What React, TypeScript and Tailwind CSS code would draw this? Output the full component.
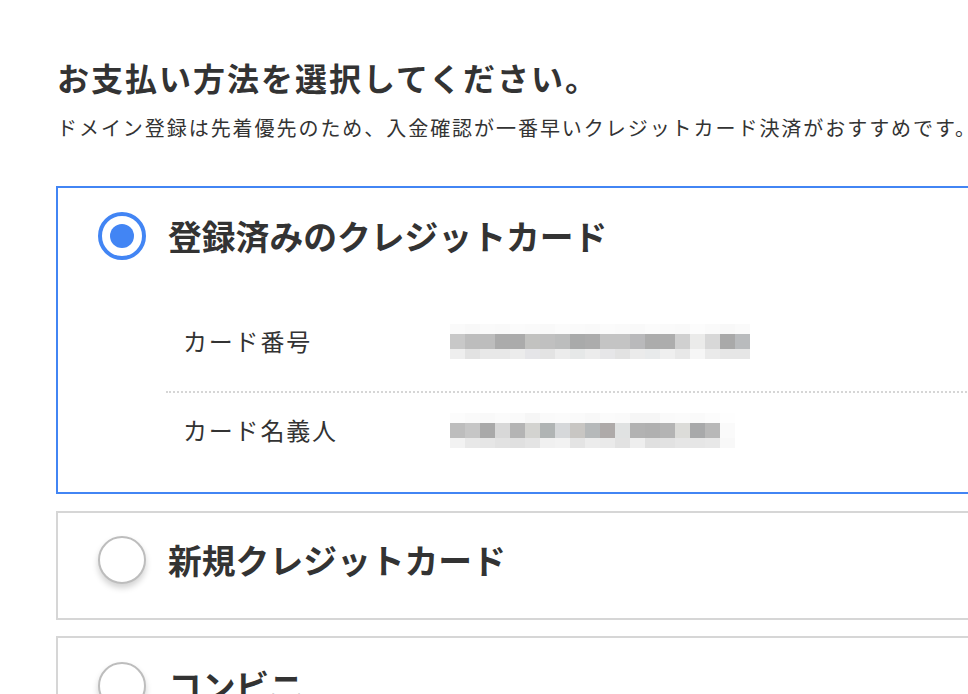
import React from "react";

const row1Main = ["#c8c8c8","#bdbdbd","#bdbdbd","#ababab","#ababab","#c2c2c0","#c0c0c0","#bcbdbd","#a9aaaa","#acacac","#c4c4c4","#c4c4c4","#b9b9bb","#acacac","#adadad","#d0d0d0","#ebebea","#d8d8d8","#a9a9a9","#b9bbbd"];
const row1Light = ["#eeeeee","#e2e2e2","#e8e8e8","#e8e8e8","#ececec","#e5e5e8","#e3e3e3","#ececec","#e6e8e8","#ececec","#e6e6e8","#e2e2e2","#ebebeb","#e8eaeb","#efefef","#e8e8e8","#f6f6f6","#eaeaea","#e6e6e6","#e6e6e6"];
const row1Faint = ["#fafafa","#f8f8f8","#fafafa","#f9f9f9","#fbfbfb","#fafafa","#f9f9f9","#fbfbfb","#fafafa","#f9f9f9","#fbfbfb","#fafafa","#f9f9f9","#fbfbfb","#fafafa","#f9f9f9","#fcfcfc","#fafafa","#f8f8f8","#fafafa"];

const row2Main = ["#bdbdbd","#c6c6c6","#a9a9a9","#d8d8d8","#b4b4b4","#d3d3d0","#b0b4b4","#d6d8da","#c8c6c3","#b6b9ba","#aeaaa9","#e0e2e2","#b2b2b2","#b0b0b0","#b4b4b4","#dcdcd9","#a8a9aa","#b8b8b8","#fafafa"];
const row2Light = ["#f2f2f2","#e8e8e8","#e6e6e6","#e2e2e2","#e0e0e0","#e4e4e4","#f0f0f0","#f2f2f2","#e4e4e4","#ececec","#eaeaea","#e2e2e2","#eeeeee","#e0e0e0","#e2e2e2","#e6e6e6","#e6e6e6","#e8e8e8","#f8f8f8"];
const row2Faint = ["#fcfcfc","#fafafa","#f9f9f9","#fbfbfb","#fafafa","#f6f6f6","#fafafa","#fbfbfb","#fafafa","#f8f8f8","#fbfbfb","#fafafa","#f6f6f6","#f6f6f6","#fafafa","#fbfbfb","#fafafa","#fcfcfc","#fefefe"];

function Mosaic({ faint, main, light }: { faint: string[]; main: string[]; light: string[] }) {
  const Row = ({ colors, h }: { colors: string[]; h: string }) => (
    <div className={`flex ${h}`}>
      {colors.map((c, i) => (
        <div key={i} className="w-[15px] h-full" style={{ backgroundColor: c }} />
      ))}
    </div>
  );
  return (
    <div className="flex flex-col">
      <Row colors={faint} h="h-[10px]" />
      <Row colors={main} h="h-[15px]" />
      <Row colors={light} h="h-[10px]" />
    </div>
  );
}

function Radio({ checked }: { checked?: boolean }) {
  if (checked) {
    return (
      <div className="w-[48px] h-[48px] rounded-full border-[4px] border-[#4285f4] flex items-center justify-center shrink-0 bg-white">
        <div className="w-[24px] h-[24px] rounded-full bg-[#4285f4]" />
      </div>
    );
  }
  return (
    <div className="w-[48px] h-[48px] rounded-full border-2 border-[#bdbdbd] bg-white shrink-0 shadow-[0_4px_6px_rgba(0,0,0,0.18)]" />
  );
}

export default function App() {
  const font = { fontFamily: '"Noto Sans CJK JP", "Noto Sans", sans-serif' };
  return (
    <div className="w-[968px] h-[694px] overflow-hidden bg-white text-[#333333]" style={font}>
      <div className="pl-[57px] pt-[57px] w-[1040px]">
        <h1 className="text-[32px] leading-[40px] font-bold tracking-[2px] text-[#333333] whitespace-nowrap">
          お支払い方法を選択してください。
        </h1>
        <p className="mt-[16px] text-[20px] leading-[30px] tracking-[1.95px] text-[#333333] whitespace-nowrap">
          ドメイン登録は先着優先のため、入金確認が一番早いクレジットカード決済がおすすめです。
        </p>

        <div className="mt-[43px] ml-[-1px] flex flex-col gap-[16px]">
          <div className="w-[960px] border-2 border-[#4285f4] pl-[40px] pt-[24px] pb-[25px] mb-[1px]">
            <div className="flex items-center h-[48px]">
              <Radio checked />
              <span className="ml-[22px] text-[33.8px] font-bold leading-[48px] whitespace-nowrap">
                登録済みのクレジットカード
              </span>
            </div>
            <div className="ml-[68px] mt-[40px]">
              <div className="flex items-center h-[93px] pb-[9px] border-b-2 border-dotted border-[#d6d6d6]">
                <span className="w-[284px] pl-[17px] text-[24px] tracking-[1.8px]">カード番号</span>
                <Mosaic faint={row1Faint} main={row1Main} light={row1Light} />
              </div>
              <div className="flex items-center h-[74px]">
                <span className="w-[284px] pl-[17px] text-[24px] tracking-[1.8px]">カード名義人</span>
                <Mosaic faint={row2Faint} main={row2Main} light={row2Light} />
              </div>
            </div>
          </div>

          <div className="w-[960px] border-2 border-[#d6d6d6] pl-[40px] pt-[23px] pb-[34px]">
            <div className="flex items-center h-[48px]">
              <Radio />
              <span className="ml-[22px] text-[33.8px] font-bold leading-[48px] whitespace-nowrap">
                新規クレジットカード
              </span>
            </div>
          </div>

          <div className="w-[960px] border-2 border-[#d6d6d6] pl-[40px] pt-[24px] pb-[33px]">
            <div className="flex items-center h-[48px]">
              <Radio />
              <span className="ml-[22px] text-[33.8px] font-bold leading-[48px] whitespace-nowrap">
                コンビニ
              </span>
            </div>
          </div>
        </div>
      </div>
    </div>
  );
}
